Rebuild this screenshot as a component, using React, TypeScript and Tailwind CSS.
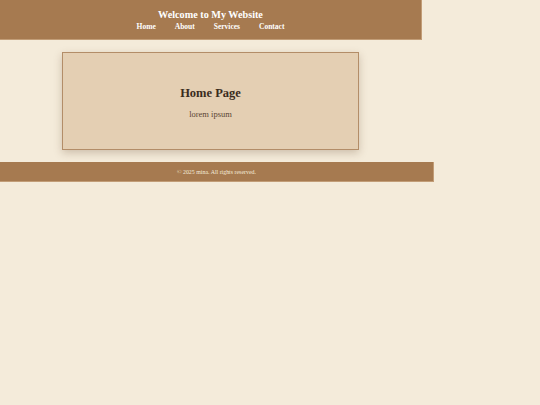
export default function App() {
  return (
    <div
      className="min-h-[405px] w-full bg-[#f4ebda]"
      style={{ fontFamily: '"Liberation Serif", "Times New Roman", serif' }}
    >
      <header className="flex h-[40px] w-[422px] flex-col items-center border-b border-r border-[#c29d77] bg-[#a67a50] pt-[8px] text-white">
        <h1 className="text-[10.2px] leading-[13px] font-bold">Welcome to My Website</h1>
        <nav className="mt-[1px] flex gap-[19px] text-[7.5px] leading-[10px] font-bold">
          <a>Home</a>
          <a>About</a>
          <a>Services</a>
          <a>Contact</a>
        </nav>
      </header>

      <main className="pt-[12px] pl-[62px]">
        <section className="flex h-[98px] w-[297px] flex-col items-center border border-[#b38d68] bg-[#e4cfb3] pt-[32px] shadow-[0_3px_8px_rgba(90,60,30,0.25)]">
          <h2 className="text-[12.5px] leading-[16px] font-bold text-[#3a2c20]">Home Page</h2>
          <p className="mt-[8px] text-[8.5px] leading-[11px] text-[#5a4534]">lorem ipsum</p>
        </section>
      </main>

      <footer className="mt-[12px] flex h-[20px] w-[434px] items-center justify-center border-r border-b border-[#c29d77] bg-[#a67a50] pt-[1px] text-[5.9px] text-[#f4ebda]">
        © 2025 mina. All rights reserved.
      </footer>
    </div>
  );
}
